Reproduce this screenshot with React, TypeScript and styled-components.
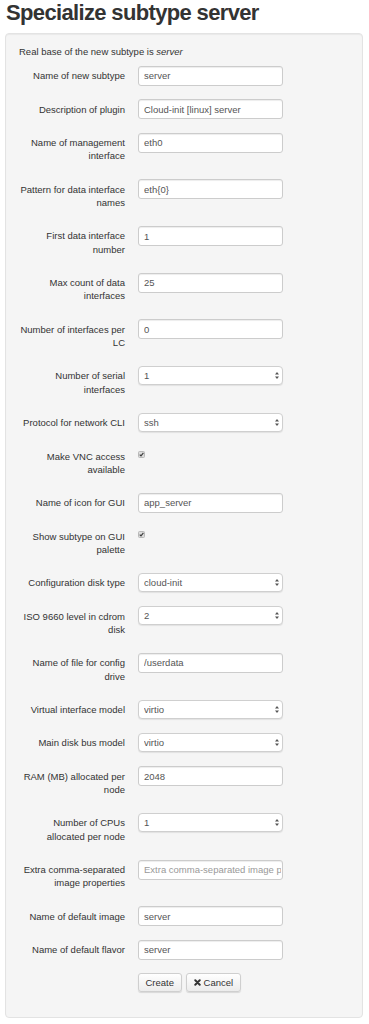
import React from "react";
import styled, { createGlobalStyle } from "styled-components";

const GlobalStyle = createGlobalStyle`
  html, body {
    margin: 0;
    padding: 0;
    background: #ffffff;
  }
  body {
    font-family: "Liberation Sans", Helvetica, Arial, sans-serif;
    color: #333333;
    font-size: 9.5px;
    line-height: 13.3px;
  }
  * { box-sizing: border-box; }
`;

const Page = styled.div`
  padding: 0 6px 6px 5px;
`;

const Title = styled.h1`
  margin: 0;
  padding-left: 1px;
  font-size: 22px;
  line-height: 26px;
  font-weight: bold;
  letter-spacing: -0.65px;
  color: #333333;
`;

const Well = styled.div`
  margin-top: 7px;
  background: #f5f5f5;
  border: 1px solid #e3e3e3;
  border-radius: 4px;
  box-shadow: inset 0 1px 1px rgba(0, 0, 0, 0.05);
  padding: 11px 12px 11.6px 12px;
`;

const Intro = styled.p`
  margin: 0 0 7.7px 0;
  padding-left: 1px;
  font-size: 9.5px;
  line-height: 13.3px;
`;

const Row = styled.div`
  display: grid;
  grid-template-columns: 107px 145px;
  column-gap: 13px;
  align-items: start;
  margin-bottom: 13.4px;
`;

const Label = styled.label`
  text-align: right;
  padding: 3.35px 0;
  font-size: 9.5px;
  line-height: 13.3px;
  font-weight: normal;
  color: #333333;
`;

const TextInput = styled.input`
  display: block;
  width: 100%;
  height: 20px;
  margin: 0;
  padding: 0 1px 0 5px;
  font-family: "Liberation Sans", Helvetica, Arial, sans-serif;
  font-size: 9.5px;
  color: #555555;
  background: #ffffff;
  border: 1px solid #cccccc;
  border-radius: 3px;
  box-shadow: inset 0 1px 1px rgba(0, 0, 0, 0.075);
  outline: none;
  &::placeholder {
    color: #999999;
  }
`;

const SelectWrap = styled.div`
  position: relative;
  width: 100%;
  height: 19px;
`;

const Select = styled.select`
  appearance: none;
  -webkit-appearance: none;
  display: block;
  width: 100%;
  height: 19px;
  margin: 0;
  padding: 0 14px 0 5px;
  font-family: "Liberation Sans", Helvetica, Arial, sans-serif;
  font-size: 9.5px;
  color: #555555;
  background: #ffffff;
  border: 1px solid #cfcfcf;
  border-radius: 4px;
  box-shadow: 0 1px 1px rgba(0, 0, 0, 0.08);
  outline: none;
`;

const Arrows = styled.svg`
  position: absolute;
  right: 4.5px;
  top: 6px;
  width: 4px;
  height: 7px;
  pointer-events: none;
`;

const CheckCell = styled.div`
  padding-top: 5px;
`;

const CheckBox = styled.span`
  display: flex;
  align-items: center;
  justify-content: center;
  width: 7px;
  height: 7px;
  background: #dcdcdc;
  border: 1px solid #b8b8b8;
  border-radius: 1.5px;
`;

const CheckMark = styled.svg`
  width: 5px;
  height: 5px;
`;

const Actions = styled.div`
  display: flex;
  gap: 4.5px;
  margin-left: 120px;
  margin-bottom: 13.4px;
`;

const Button = styled.button`
  display: flex;
  align-items: center;
  gap: 3px;
  height: 19px;
  padding: 0 6.5px;
  font-family: "Liberation Sans", Helvetica, Arial, sans-serif;
  font-size: 9.5px;
  color: #333333;
  background: linear-gradient(#ffffff, #ececec);
  border: 1px solid #cfcfcf;
  border-radius: 3px;
  box-shadow: 0 1px 1px rgba(0, 0, 0, 0.12);
  cursor: pointer;
`;

const XIcon = styled.svg`
  width: 7px;
  height: 7px;
`;

type Field =
  | { label: string; kind: "input"; value?: string; placeholder?: string }
  | { label: string; kind: "select"; value: string }
  | { label: string; kind: "checkbox" };

const fields: Field[] = [
  { label: "Name of new subtype", kind: "input", value: "server" },
  { label: "Description of plugin", kind: "input", value: "Cloud-init [linux] server" },
  { label: "Name of management interface", kind: "input", value: "eth0" },
  { label: "Pattern for data interface names", kind: "input", value: "eth{0}" },
  { label: "First data interface number", kind: "input", value: "1" },
  { label: "Max count of data interfaces", kind: "input", value: "25" },
  { label: "Number of interfaces per LC", kind: "input", value: "0" },
  { label: "Number of serial interfaces", kind: "select", value: "1" },
  { label: "Protocol for network CLI", kind: "select", value: "ssh" },
  { label: "Make VNC access available", kind: "checkbox" },
  { label: "Name of icon for GUI", kind: "input", value: "app_server" },
  { label: "Show subtype on GUI palette", kind: "checkbox" },
  { label: "Configuration disk type", kind: "select", value: "cloud-init" },
  { label: "ISO 9660 level in cdrom disk", kind: "select", value: "2" },
  { label: "Name of file for config drive", kind: "input", value: "/userdata" },
  { label: "Virtual interface model", kind: "select", value: "virtio" },
  { label: "Main disk bus model", kind: "select", value: "virtio" },
  { label: "RAM (MB) allocated per node", kind: "input", value: "2048" },
  { label: "Number of CPUs allocated per node", kind: "select", value: "1" },
  {
    label: "Extra comma-separated image properties",
    kind: "input",
    placeholder: "Extra comma-separated image properties",
  },
  { label: "Name of default image", kind: "input", value: "server" },
  { label: "Name of default flavor", kind: "input", value: "server" },
];

function Control({ field, id }: { field: Field; id: string }) {
  if (field.kind === "input") {
    return (
      <TextInput
        id={id}
        type="text"
        defaultValue={field.value}
        placeholder={field.placeholder}
      />
    );
  }
  if (field.kind === "select") {
    return (
      <SelectWrap>
        <Select id={id} defaultValue={field.value}>
          <option value={field.value}>{field.value}</option>
        </Select>
        <Arrows viewBox="0 0 4 7">
          <path d="M2 0 L4 2.6 H0 Z M2 7 L4 4.4 H0 Z" fill="#555" />
        </Arrows>
      </SelectWrap>
    );
  }
  return (
    <CheckCell>
      <CheckBox>
        <CheckMark viewBox="0 0 10 10">
          <path
            d="M1.5 5.2 L4 7.8 L8.8 1.8"
            fill="none"
            stroke="#3a3a3a"
            strokeWidth="2.2"
          />
        </CheckMark>
      </CheckBox>
    </CheckCell>
  );
}

export default function App() {
  return (
    <Page>
      <GlobalStyle />
      <Title>Specialize subtype server</Title>
      <Well>
        <Intro>
          Real base of the new subtype is <em>server</em>
        </Intro>
        {fields.map((f, i) => (
          <Row key={i}>
            <Label htmlFor={`f${i}`}>{f.label}</Label>
            <Control field={f} id={`f${i}`} />
          </Row>
        ))}
        <Actions>
          <Button type="submit">Create</Button>
          <Button type="button">
            <XIcon viewBox="0 0 10 10">
              <path
                d="M1.8 1.8 L8.2 8.2 M8.2 1.8 L1.8 8.2"
                stroke="#333"
                strokeWidth="2.8"
                strokeLinecap="round"
              />
            </XIcon>
            Cancel
          </Button>
        </Actions>
      </Well>
    </Page>
  );
}
